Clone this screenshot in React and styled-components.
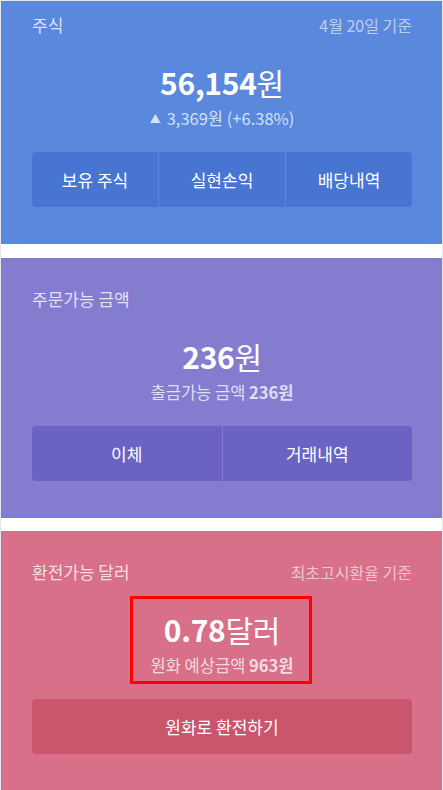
import styled, { createGlobalStyle } from 'styled-components'

const Global = createGlobalStyle`
  html, body { margin: 0; padding: 0; background: #fff; }
  body {
    font-family: "Noto Sans CJK KR", "Noto Sans", sans-serif;
    -webkit-font-smoothing: antialiased;
  }
`

const palette = {
  blue: { bg: '#5a88dc', btn: '#4875d2' },
  purple: { bg: '#847dcf', btn: '#6b63c4' },
  pink: { bg: '#d77088', btn: '#c9566d' },
}

const Page = styled.div`
  width: 443px;
  height: 790px;
  box-sizing: border-box;
  border: 1px solid #e3e6ec;
  border-bottom: none;
  display: flex;
  flex-direction: column;
  gap: 14px;
  overflow: hidden;
  background: #fff;
`

const Card = styled.section`
  background: ${p => palette[p.$tone].bg};
  padding: ${p => (p.$cut ? 13 : 30)}px 30px 37px 31px;
  display: flex;
  flex-direction: column;
  align-items: center;
  color: #fff;
  flex-shrink: 0;
  margin-top: ${p => (p.$tight ? -1 : 0)}px;
`

const Header = styled.div`
  align-self: stretch;
  display: flex;
  justify-content: space-between;
  align-items: center;
  height: 22px;
  line-height: 22px;
`

const Label = styled.span`
  font-size: 17px;
  color: rgba(255, 255, 255, 0.78);
`

const Basis = styled.span`
  font-size: 16px;
  color: rgba(255, 255, 255, 0.6);
`

const AmountBlock = styled.div`
  position: relative;
  margin-top: 26px;
  display: flex;
  flex-direction: column;
  align-items: center;
`

const Amount = styled.div`
  font-size: 30px;
  height: 40px;
  line-height: 40px;
  font-weight: 700;
  letter-spacing: -0.3px;
  span { font-weight: 400; }
`

const Sub = styled.div`
  margin-top: 6px;
  height: 20px;
  font-size: 16.5px;
  line-height: 20px;
  color: rgba(255, 255, 255, 0.75);
  b { font-weight: 700; }
`

const Up = styled.span`
  font-size: 11px;
  line-height: 1;
  margin-right: 6px;
  vertical-align: 2px;
`

const Highlight = styled.span`
  position: absolute;
  top: -13px;
  bottom: -9px;
  left: -21px;
  right: -19px;
  border: 3px solid #ff0000;
  pointer-events: none;
`

const Actions = styled.div`
  align-self: stretch;
  margin-top: 24px;
  display: flex;
  gap: 1px;
  height: 55px;
  border-radius: 4px;
  overflow: hidden;
`

const Action = styled.button`
  flex: 1;
  border: none;
  background: ${p => palette[p.$tone].btn};
  color: #fff;
  font-family: inherit;
  font-size: 17px;
  font-weight: 400;
  padding: 0;
  cursor: pointer;
`

export default function App() {
  return (
    <>
      <Global />
      <Page>
        <Card $tone="blue" $cut>
          <Header>
            <Label>주식</Label>
            <Basis>4월 20일 기준</Basis>
          </Header>
          <AmountBlock>
            <Amount>56,154<span>원</span></Amount>
            <Sub><Up>▲</Up>3,369원 (+6.38%)</Sub>
          </AmountBlock>
          <Actions>
            <Action $tone="blue">보유 주식</Action>
            <Action $tone="blue">실현손익</Action>
            <Action $tone="blue">배당내역</Action>
          </Actions>
        </Card>

        <Card $tone="purple">
          <Header>
            <Label>주문가능 금액</Label>
          </Header>
          <AmountBlock>
            <Amount>236<span>원</span></Amount>
            <Sub>출금가능 금액 <b>236원</b></Sub>
          </AmountBlock>
          <Actions>
            <Action $tone="purple">이체</Action>
            <Action $tone="purple">거래내역</Action>
          </Actions>
        </Card>

        <Card $tone="pink" $tight>
          <Header>
            <Label>환전가능 달러</Label>
            <Basis>최초고시환율 기준</Basis>
          </Header>
          <AmountBlock>
            <Amount>0.78<span>달러</span></Amount>
            <Sub>원화 예상금액 <b>963원</b></Sub>
            <Highlight />
          </AmountBlock>
          <Actions>
            <Action $tone="pink">원화로 환전하기</Action>
          </Actions>
        </Card>
      </Page>
    </>
  )
}
